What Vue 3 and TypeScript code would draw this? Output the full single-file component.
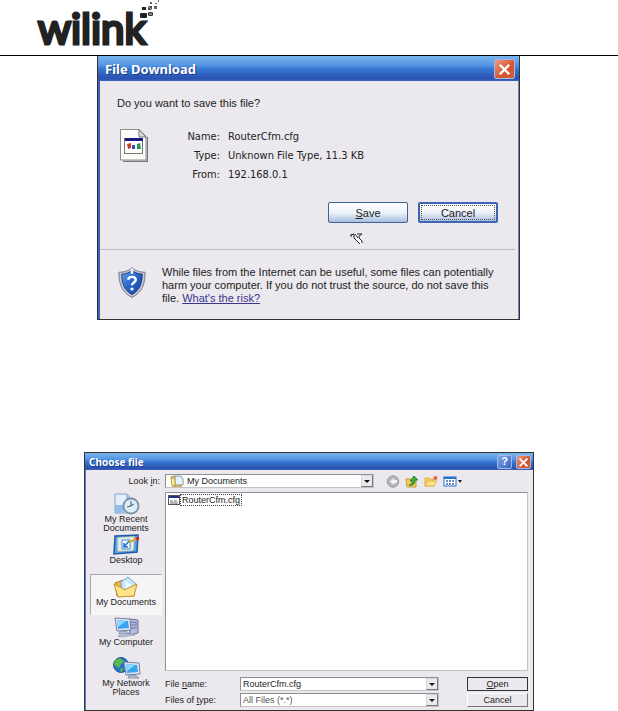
<script setup lang="ts">
import { ref } from 'vue'

interface Detail {
  label: string
  value: string
}

interface Place {
  id: string
  label: string
}

const details: Detail[] = [
  { label: 'Name:', value: 'RouterCfm.cfg' },
  { label: 'Type:', value: 'Unknown File Type, 11.3 KB' },
  { label: 'From:', value: '192.168.0.1' },
]

const places: Place[] = [
  { id: 'recent', label: 'My Recent Documents' },
  { id: 'desktop', label: 'Desktop' },
  { id: 'documents', label: 'My Documents' },
  { id: 'computer', label: 'My Computer' },
  { id: 'network', label: 'My Network Places' },
]

const current = ref('documents')
const fileName = ref('RouterCfm.cfg')
</script>

<template>
  <div class="page">
    <header class="masthead">
      <div class="logo">
        <span class="wordmark">wilink</span>
        <svg class="pixels" width="20" height="20" viewBox="0 0 20 20" aria-hidden="true">
          <g fill="#222">
            <rect x="0" y="13" width="7" height="5" rx="1" />
            <rect x="8" y="12" width="5" height="4" />
            <rect x="2" y="7" width="4" height="3" />
            <rect x="8" y="6" width="4" height="4" opacity=".8" />
            <rect x="14" y="6" width="3" height="3" opacity=".7" />
            <rect x="10" y="2" width="2" height="2" opacity=".7" />
            <rect x="15" y="3" width="2" height="1" opacity=".7" />
            <rect x="18" y="0" width="1" height="2" opacity=".7" />
          </g>
          <path d="M8 12l5 4M13 12l-5 4M8 6l4 4" stroke="#fff" stroke-width=".6" />
        </svg>
      </div>
    </header>

    <section class="download" aria-labelledby="download-title">
      <div class="titlebar">
        <h2 id="download-title">File Download</h2>
        <button class="close" type="button" aria-label="Close">
          <svg viewBox="0 0 20 20"><path d="M5 5l10 10M15 5L5 15" stroke="#fff" stroke-width="2.6" /></svg>
        </button>
      </div>

      <div class="download-body">
        <p class="question">Do you want to save this file?</p>
        <div class="file">
          <svg class="file-icon" width="28" height="33" viewBox="0 0 28 33" aria-hidden="true">
            <path d="M3 32.500H27.500V8" fill="none" stroke="#77777b" stroke-width="1.500" />
            <path d="M.5.5H19L26 7.500V31H.5Z" fill="#fcfcf8" stroke="#8c8c8c" />
            <path d="M19 .5V8H26Z" fill="#ddd" stroke="#777" />
            <rect x="4.500" y="9.500" width="18" height="15" fill="#fff" stroke="#777" />
            <rect x="5" y="9" width="18" height="3" fill="#1a1a80" />
            <path d="M7 15l4-1v5l-3 1z" fill="#c8402c" />
            <path d="M12 16h3v4h-3z" fill="#3450b8" />
            <path d="M17 15l3-1 1 6h-4z" fill="#2c9160" />
          </svg>
          <dl class="details">
            <template v-for="d in details" :key="d.label">
              <dt>{{ d.label }}</dt>
              <dd>{{ d.value }}</dd>
            </template>
          </dl>
        </div>
        <div class="actions">
          <button type="button" class="xp"><u>S</u>ave</button>
          <button type="button" class="xp focused">Cancel</button>
          <svg class="pointer" width="14" height="13" viewBox="0 0 14 13" aria-hidden="true">
            <path d="M5 2H12L9 5L12 10L10 12L5 5Z" fill="#fff" />
            <path d="M1 2V5M1 3L4 2V6L10 12M5 2L8 6M7 2H12L9 4V6L12 9V11" fill="none" stroke="#222" />
          </svg>
        </div>
      </div>

      <div class="advice">
        <svg class="shield" width="28" height="33" viewBox="0 0 30 34" aria-hidden="true">
          <defs>
            <linearGradient id="shield" x1="0" y1="0" x2="1" y2="1">
              <stop offset="0" stop-color="#69a5ea" />
              <stop offset=".5" stop-color="#2565cc" />
              <stop offset="1" stop-color="#164396" />
            </linearGradient>
          </defs>
          <path d="M15 1C11 5 6 6 1 6C1 17 3 27 15 33C27 27 29 17 29 6C24 6 19 5 15 1Z" fill="#c4cad6" stroke="#6b7485" />
          <path d="M15 4C11 7 7 8 4 8C4 17 6 25 15 30C24 25 26 17 26 8C23 8 19 7 15 4Z" fill="url(#shield)" stroke="#225" stroke-width=".8" />
          <path d="M13 2h4l-1 6h-2z" fill="#e8eef8" />
          <path d="M11 14C11 10 19 10 19 14C19 17 15 17 15 20" fill="none" stroke="#fff" stroke-width="2.600" />
          <circle cx="15" cy="24" r="1.700" fill="#fff" />
        </svg>
        <p>
          While files from the Internet can be useful, some files can potentially
          harm your computer. If you do not trust the source, do not save this
          file. <a href="#risk">What's the risk?</a>
        </p>
      </div>
    </section>

    <section class="chooser" aria-labelledby="chooser-title">
      <div class="titlebar">
        <h2 id="chooser-title">Choose file</h2>
        <button class="help" type="button" aria-label="Help">?</button>
        <button class="close" type="button" aria-label="Close">
          <svg viewBox="0 0 20 20"><path d="M4 4l12 12M16 4L4 16" stroke="#fff" stroke-width="3" /></svg>
        </button>
      </div>

      <div class="chooser-body">
        <label class="look-label" for="look-in">Look <u>i</u>n:</label>
        <div class="toolbar">
          <div class="combo folder-combo">
            <svg class="folder" width="14" height="12" viewBox="0 0 14 12" aria-hidden="true">
              <path d="M1 2l4-1 1 2h5v8H3z" fill="#f3cf62" stroke="#a98226" />
              <path d="M5 1h6l2 3v6H5z" fill="#e6f2fb" stroke="#7c98b4" />
              <path d="M1 3l4 1v7H2z" fill="#ffe998" stroke="#b69032" stroke-width=".7" />
              <path d="M2 11h10" stroke="#d8a83c" stroke-width="1.500" />
            </svg>
            <select id="look-in">
              <option>My Documents</option>
            </select>
            <span class="arrow" aria-hidden="true"></span>
          </div>
          <div class="tools">
            <button type="button" aria-label="Back">
              <svg width="14" height="13" viewBox="0 0 14 13">
                <circle cx="7" cy="6.500" r="5.700" fill="#b8b8ba" stroke="#98989c" />
                <path d="M8 3L4 6.500L8 10V8h3V5H8z" fill="#f4f4f4" />
              </svg>
            </button>
            <button type="button" aria-label="Up one level">
              <svg width="14" height="13" viewBox="0 0 14 13">
                <path d="M1 4h4l1 1h5v7H2z" fill="#f2cf56" stroke="#c49a34" />
                <path d="M4 10C7 10 7 8 7 6H5L9 1L13 5H10C10 9 8 11 4 10Z" fill="#3cae3c" stroke="#207a26" stroke-width=".8" />
              </svg>
            </button>
            <button type="button" aria-label="Create new folder">
              <svg width="14" height="13" viewBox="0 0 14 13">
                <path d="M1 11V3h4l1 1h4v7z" fill="#f2cb58" stroke="#dcae4a" />
                <path d="M1 11L4 6h9l-3 5z" fill="#ffe38a" stroke="#e0b456" />
                <circle cx="11.500" cy="3" r="2" fill="#f0623c" />
              </svg>
            </button>
            <button type="button" aria-label="View menu">
              <svg width="19" height="13" viewBox="0 0 19 13">
                <rect x="1" y="2" width="12" height="9" fill="#fff" stroke="#2470cc" />
                <path d="M1 3h12" stroke="#2470cc" stroke-width="2" />
                <path d="M3 6h2m1 0h2m1 0h2M3 9h2m1 0h2m1 0h2" stroke="#3e67a8" stroke-width="1.500" />
                <path d="M15 5h4l-2 3z" fill="#222" />
              </svg>
            </button>
          </div>
        </div>

        <nav class="places" aria-label="Places">
          <button
            v-for="p in places"
            :key="p.id"
            type="button"
            :class="{ selected: p.id === current }"
            @click="current = p.id"
          >
            <svg width="30" height="22" viewBox="0 0 30 22" aria-hidden="true">
              <template v-if="p.id === 'recent'">
                <path d="M4 1h12l5 5v14H4z" fill="#e5effc" stroke="#86a5d2" />
                <path d="M16 1v5h5" fill="#a9c9f2" stroke="#86a5d2" />
                <path d="M4 12h9v8H4z" fill="#94bdec" />
                <circle cx="20" cy="13" r="7.500" fill="#dceef8" stroke="#7d8fa8" stroke-width="1.800" />
                <path d="M20 13V8M20 13l-4 1M20 13l3-2" stroke="#456" fill="none" />
              </template>
              <template v-else-if="p.id === 'desktop'">
                <path d="M4 2l23-1-1 17-23 2z" fill="#5ca4e8" stroke="#2259a6" stroke-width="1.500" />
                <path d="M7 4l16-1-1 13-15 1z" fill="#d6efff" stroke="#f2dda0" />
                <path d="M11 6h8v9h-8z" fill="#fff" stroke="#4688c8" />
                <path d="M13 13l5-6M13 9v4h4" stroke="#2474c8" stroke-width="1.500" fill="none" />
                <path d="M18 8l8-3" stroke="#d7a52a" stroke-width="2" />
                <path d="M25 5l3-1" stroke="#d02b20" stroke-width="3" />
              </template>
              <template v-else-if="p.id === 'documents'">
                <path d="M4 7l8-3 2 3h9v13H6z" fill="#eab946" stroke="#aa7d28" />
                <path d="M10 6l7-5 8 7-6 10-8-2z" fill="#c5e7fa" stroke="#72a7cf" />
                <path d="M14 5l7 4-6 5z" fill="#eefaff" />
                <path d="M3 8l8 4 2 2 13-6-3 12-16 1z" fill="#ffe58a" stroke="#be9131" />
              </template>
              <template v-else>
                <path v-if="p.id === 'computer'" d="M18 3l9 1v13l-8 2z" fill="#b4bddb" stroke="#6b779f" />
                <path v-if="p.id === 'computer'" d="M20 6l6 1M20 9l6 0M20 12l6 0" stroke="#67739d" />
                <circle v-if="p.id === 'network'" cx="10" cy="8" r="7.500" fill="#2872ca" stroke="#25539a" />
                <path v-if="p.id === 'network'" d="M4 3l5-2 4 3-3 3-2 4-5-3zM9 12l4-1-3 5z" fill="#55b94b" />
                <g :transform="p.id === 'network' ? 'translate(9 3)' : 'translate(0 0)'">
                  <path d="M4 2l15 1 1 11-14 1z" fill="#e1e5f1" stroke="#7480a4" />
                  <path d="M6 4l11 1 1 7-11 1z" fill="#38a4ed" />
                  <path d="M6 4l9 1-8 6z" fill="#8adaff" />
                  <path d="M9 15h6l4 3H8z" fill="#b3bbd5" stroke="#7882a1" stroke-width=".7" />
                </g>
                <path v-if="p.id === 'computer'" d="M7 20l14-2 3 1-13 2z" fill="#d6daea" stroke="#8993b3" stroke-width=".7" />
              </template>
            </svg>
            <span>{{ p.label }}</span>
          </button>
        </nav>

        <ul class="files">
          <li>
            <svg width="12" height="10" viewBox="0 0 12 10" aria-hidden="true">
              <rect x=".5" y=".5" width="11" height="9" fill="#fff" stroke="#555" />
              <path d="M1 2h10" stroke="#223388" stroke-width="2" />
              <path d="M2 6h3m1 0h3M2 8h8" stroke="#666" />
            </svg>
            <span>RouterCfm.cfg</span>
          </li>
        </ul>

        <form class="fields" @submit.prevent>
          <label for="file-name">File <u>n</u>ame:</label>
          <div class="combo">
            <input id="file-name" v-model="fileName" type="text" />
            <span class="arrow" aria-hidden="true"></span>
          </div>
          <button type="submit" class="classic default"><u>O</u>pen</button>
          <label for="file-type">Files of <u>t</u>ype:</label>
          <div class="combo">
            <select id="file-type" class="muted">
              <option>All Files (*.*)</option>
            </select>
            <span class="arrow" aria-hidden="true"></span>
          </div>
          <button type="button" class="classic">Cancel</button>
        </form>
      </div>
    </section>
  </div>
</template>

<style>
body {
  margin: 0;
  background: #fff;
}
</style>

<style scoped>
* {
  box-sizing: border-box;
}

.page {
  font-family: "Liberation Sans", Arial, sans-serif;
  color: #222;
}

button,
input,
select {
  margin: 0;
  padding: 0;
  border: 0;
  border-radius: 0;
  font: inherit;
  color: inherit;
  background: none;
}

h2,
p,
dl,
dd,
ul {
  margin: 0;
  padding: 0;
}

svg {
  display: block;
}

.masthead {
  height: 56px;
  padding-left: 38px;
  border-bottom: 1px solid #000;
}

.logo {
  display: flex;
  align-items: flex-start;
}

.wordmark {
  font-family: "Lato", sans-serif;
  font-size: 42px;
  font-weight: 400;
  line-height: 56px;
  color: #222;
  -webkit-text-stroke: 3px #222;
}

.pixels {
  margin-left: -6px;
}

.titlebar {
  display: flex;
  align-items: center;
  background: linear-gradient(#78b5ee, #5797e4 35%, #3474ce 55%, #2b50b0 90%, #3a66c0);
  color: #fff;
}

.titlebar h2 {
  flex: 1;
  font-family: "Noto Sans", sans-serif;
  font-weight: 700;
  text-shadow: 1px 1px #1b3c86;
}

.close,
.help {
  border: 1px solid #a9b8e6;
  border-radius: 2px;
  background: linear-gradient(135deg, #e89c86, #d8542e 60%, #cf5a3c);
}

.help {
  background: linear-gradient(135deg, #7ea6e6, #3567c4);
  font-weight: 700;
}

.download {
  margin: 0 98px 0 97px;
  border: 1px solid #333;
  border-top: 0;
  background: #ebe9ed;
  box-shadow: inset 2px 0 #3b62b8, inset -1px 0 #7089bd;
}

.download .titlebar {
  height: 25px;
  padding: 0 4px 0 7px;
}

.download .titlebar h2 {
  font-size: 13px;
  line-height: 22px;
}

.download .close {
  width: 21px;
  height: 20px;
}

.download-body {
  margin: 0 4px 0 2px;
  padding: 15px 17px 26px;
  border-bottom: 1px solid #bdbcc4;
}

.question {
  font-size: 11px;
  line-height: 14px;
}

.file {
  display: flex;
  gap: 32px;
  padding: 17px 3px 0;
}

.file-icon {
  margin-top: 2px;
}

.details {
  display: grid;
  grid-template-columns: 40px 1fr;
  column-gap: 8px;
  font-family: "DejaVu Sans Condensed", "DejaVu Sans", sans-serif;
  font-size: 11px;
  line-height: 19px;
}

.details dt {
  text-align: right;
}

.actions {
  position: relative;
  display: flex;
  justify-content: flex-end;
  gap: 10px;
  padding-top: 18px;
}

.xp {
  width: 80px;
  height: 21px;
  border: 1px solid #3e62a0;
  border-radius: 2px;
  background: linear-gradient(#fff, #eef3fa 50%, #a9bfdc);
  font-size: 11px;
}

.focused {
  border: 2px solid #3e65b4;
  outline: 1px dotted #555;
  outline-offset: -4px;
}

.pointer {
  position: absolute;
  right: 134px;
  top: 48px;
}

.advice {
  display: flex;
  gap: 16px;
  padding: 16px 18px 14px 20px;
}

.shield {
  flex: none;
}

.advice p {
  font-size: 11px;
  line-height: 13px;
  min-height: 39px;
}

.advice a {
  display: inline-block;
  color: #3b3590;
}

.chooser {
  margin: 132px 84px 0;
  border: 1px solid #333;
  background: #ebe9ed;
  box-shadow: inset 1px 0 #5d7fc4;
  font-size: 9px;
  line-height: 9px;
}

.chooser .titlebar {
  height: 17px;
  gap: 4px;
  padding: 0 2px 0 4px;
}

.chooser .titlebar h2 {
  font-size: 10px;
  line-height: 16px;
}

.chooser .close,
.chooser .help {
  width: 15px;
  height: 14px;
  line-height: 11px;
  font-size: 11px;
}

.chooser-body {
  display: grid;
  grid-template-columns: 72px 1fr;
  column-gap: 3px;
  grid-template-rows: 22px 179px auto;
  padding: 0 5px 3px 5px;
}

.look-label {
  align-self: center;
  text-align: right;
  padding-right: 2px;
}

.toolbar,
.tools {
  display: flex;
  align-items: center;
}

.toolbar {
  gap: 12px;
}

.tools {
  gap: 5px;
  padding-right: 66px;
}

.combo {
  display: flex;
  align-items: center;
  height: 14px;
  border: 1px solid #8f8f94;
  border-right-color: #c4c4c8;
  border-bottom-color: #c4c4c8;
  background: #fff;
}

.folder-combo {
  flex: 1;
}

.folder {
  margin-left: 4px;
}

.combo input,
.combo select {
  appearance: none;
  flex: 1;
  min-width: 0;
  height: 12px;
  padding: 0 2px;
  line-height: 12px;
}

.folder-combo select {
  padding-left: 3px;
}

.combo .muted {
  color: #555;
}

.arrow {
  display: grid;
  place-items: center;
  width: 12px;
  height: 12px;
  border: 1px solid #d8d8dc;
  border-right-color: #77777b;
  border-bottom-color: #77777b;
  background: #ebe9ed;
  pointer-events: none;
}

.arrow::after {
  content: "";
  border: 3px solid transparent;
  border-top-color: #111;
  border-bottom: 0;
}

.places {
  grid-row: 2 / 4;
  display: grid;
  grid-auto-rows: 41px;
  align-content: start;
}

.places button {
  display: flex;
  flex-direction: column;
  align-items: center;
  padding: 1px 0 0;
  line-height: 9px;
}

.places span {
  max-width: 66px;
}

.places .selected {
  border: 1px solid #f8f8f8;
  border-top-color: #a8a8ae;
  border-left-color: #a8a8ae;
  background: #f5f4f6;
}

.files {
  border: 1px solid #8f8f94;
  border-right-color: #c4c4c8;
  border-bottom-color: #c4c4c8;
  background: #fff;
  list-style: none;
}

.files li {
  display: flex;
  align-items: center;
  padding: 1px 2px;
}

.files span {
  padding: 0 1px;
  border: 1px dotted #444;
  line-height: 10px;
}

.fields {
  display: grid;
  grid-template-columns: 75px 1fr 61px;
  gap: 2px 0;
  align-items: center;
  padding-top: 6px;
}

.fields .combo {
  margin-right: 28px;
}

.classic {
  height: 14px;
  border: 1px solid #fff;
  border-right-color: #77777b;
  border-bottom-color: #77777b;
  background: #ebe9ed;
  line-height: 10px;
}

.default {
  border: 1px solid #333;
}
</style>
